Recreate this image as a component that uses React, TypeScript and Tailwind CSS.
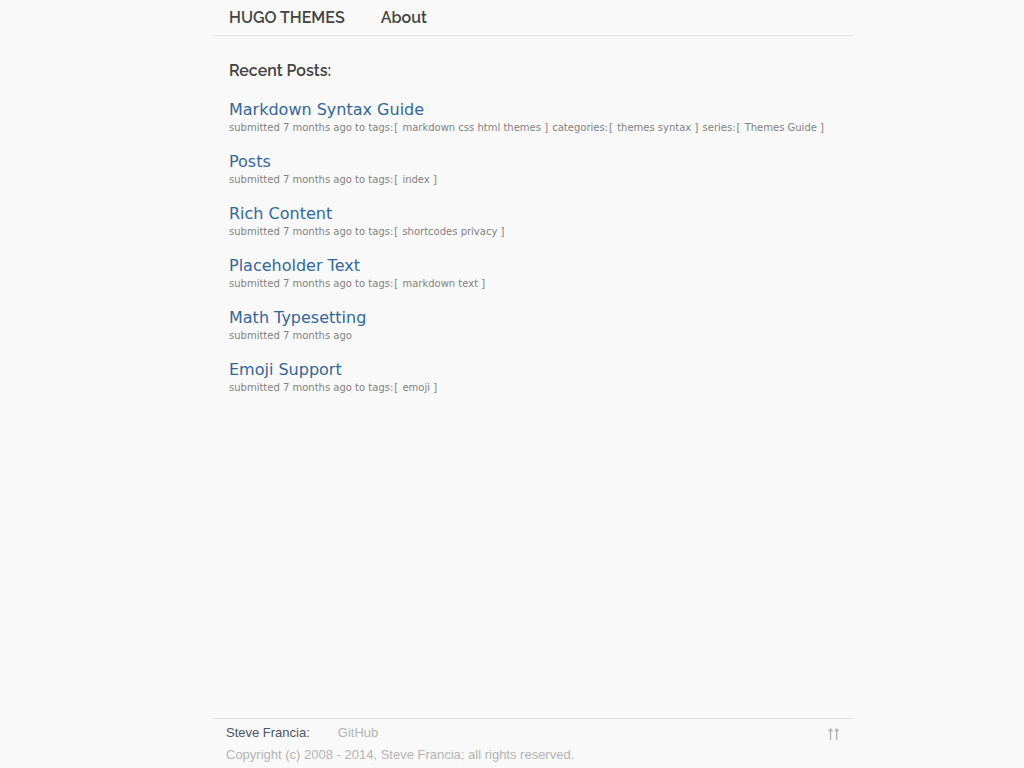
type Taxonomy = { name: string; terms: string[] };
type Post = { title: string; taxonomies: Taxonomy[] };

const posts: Post[] = [
  {
    title: "Markdown Syntax Guide",
    taxonomies: [
      { name: "tags", terms: ["markdown", "css", "html", "themes"] },
      { name: "categories", terms: ["themes", "syntax"] },
      { name: "series", terms: ["Themes Guide"] },
    ],
  },
  { title: "Posts", taxonomies: [{ name: "tags", terms: ["index"] }] },
  { title: "Rich Content", taxonomies: [{ name: "tags", terms: ["shortcodes", "privacy"] }] },
  { title: "Placeholder Text", taxonomies: [{ name: "tags", terms: ["markdown", "text"] }] },
  { title: "Math Typesetting", taxonomies: [] },
  { title: "Emoji Support", taxonomies: [{ name: "tags", terms: ["emoji"] }] },
];

function PostItem({ post }: { post: Post }) {
  return (
    <li className="font-[Verdana,'DejaVu_Sans',sans-serif]">
      <h3 className="text-[16px] leading-5 text-[#336699]">
        <a href="#">{post.title}</a>
      </h3>
      <p className="text-[10px] leading-4 text-[#828282]">
        submitted 7 months ago
        {post.taxonomies.length > 0 && " to "}
        {post.taxonomies.map((t) => (
          <span key={t.name}>
            {t.name}:<span className="mx-px">[</span>{" "}
            {t.terms.map((term) => (
              <span key={term}>
                <a href="#">{term}</a>{" "}
              </span>
            ))}
            <span className="mr-px">]</span>{" "}
          </span>
        ))}
      </p>
    </li>
  );
}

export default function App() {
  return (
    <div className="min-h-screen bg-[#f9f9f9]">
      <div className="flex min-h-screen max-w-[640px] flex-col md:ml-[213px]">
        <header className="border-b border-[#e0e0e0] px-4 py-1.5">
          <nav className="flex gap-9 font-[Raleway,Lato,sans-serif] text-[16px] leading-[23px] font-semibold text-[#444444]">
            <a href="#">HUGO THEMES</a>
            <a href="#">About</a>
          </nav>
        </header>
        <main className="flex-1 px-4 pt-6">
          <h2 className="font-[Raleway,Lato,sans-serif] text-[16px] leading-[22px] font-semibold text-[#444444]">
            Recent Posts:
          </h2>
          <ul className="mt-[18px] flex flex-col gap-4">
            {posts.map((post) => (
              <PostItem key={post.title} post={post} />
            ))}
          </ul>
        </main>
        <footer className="flex items-start justify-between border-t border-[#e0e0e0] px-[13px] pt-[3px] pb-0.5 font-['Liberation_Sans',Arial,sans-serif] text-[13px] leading-[22px] text-[#b4b4b4]">
          <div>
            <div className="flex gap-7">
              <span className="text-[#4d5560]">Steve Francia:</span>
              <a href="#">GitHub</a>
            </div>
            <p>Copyright (c) 2008 - 2014, Steve Francia; all rights reserved.</p>
          </div>
          <a href="#" aria-label="Back to top" className="pt-[6px]">
            <svg width="13" height="12" viewBox="0 0 13 12" fill="currentColor" aria-hidden="true">
              <path d="M3.5 0 6.2 3.2H4.2V12H2.8V3.2H0.8Z" />
              <path d="M9.7 0 12.4 3.2H10.4V12H9V3.2H7Z" />
            </svg>
          </a>
        </footer>
      </div>
    </div>
  );
}
